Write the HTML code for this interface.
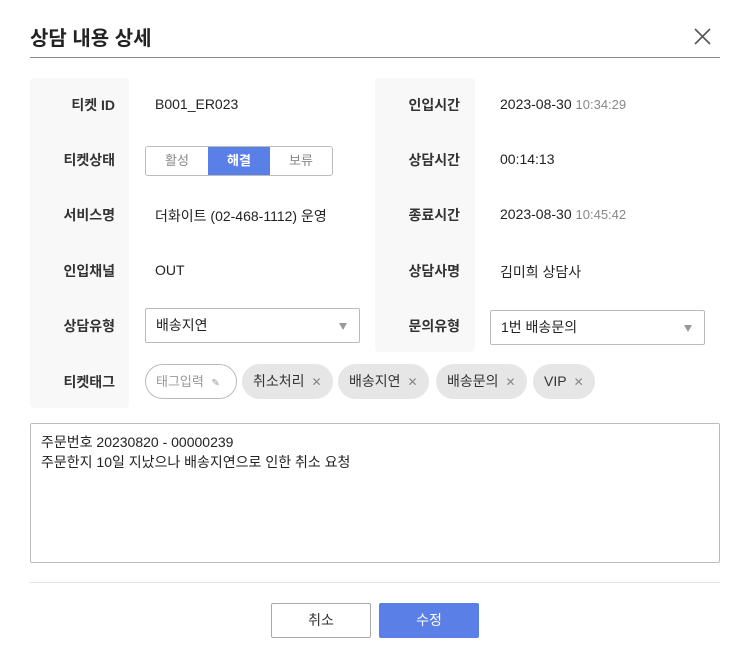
<!DOCTYPE html>
<html><head><meta charset="utf-8"><style>
*{box-sizing:border-box;margin:0;padding:0}
body{width:750px;height:658px;background:#fff;font-family:"Liberation Sans","Noto Sans CJK KR",sans-serif;color:#222;position:relative;overflow:hidden}
.a{position:absolute}
.lab{font-size:14px;font-weight:bold;color:#333;text-align:right}
.val{font-size:14px;color:#222}
.gray{color:#888}
.sel{border:1px solid #bbb;border-radius:2px;height:35px;font-size:14px;padding:0 10px;line-height:33px}
.sel:after{content:"";position:absolute;right:12px;top:14px;border-left:4px solid transparent;border-right:4px solid transparent;border-top:7px solid #999}
.tag{height:35px;border-radius:18px;background:#e6e6e6;font-size:14px;line-height:35px;padding:0 11px;color:#333}
.tag span{color:#888;font-size:12px;margin-left:7px}
</style></head><body>
<div class="a" style="left:30px;top:22px;font-size:20px;font-weight:bold;color:#222">상담 내용 상세</div>
<svg class="a" style="left:694px;top:28px" width="17" height="17" viewBox="0 0 17 17"><path d="M1 1L16 16M16 1L1 16" stroke="#555" stroke-width="1.6"/></svg>
<div class="a" style="left:30px;top:57px;width:690px;height:1px;background:#888"></div>
<div class="a" style="left:30px;top:78px;width:99px;height:330px;background:#f8f8f8;border-radius:4px"></div>
<div class="a" style="left:375px;top:78px;width:100px;height:274px;background:#f8f8f8;border-radius:4px"></div>

<div class="a lab" style="left:30px;width:85px;top:95px">티켓 ID</div>
<div class="a lab" style="left:30px;width:85px;top:150px">티켓상태</div>
<div class="a lab" style="left:30px;width:85px;top:205px">서비스명</div>
<div class="a lab" style="left:30px;width:85px;top:261px">인입채널</div>
<div class="a lab" style="left:30px;width:85px;top:316px">상담유형</div>
<div class="a lab" style="left:30px;width:85px;top:372px">티켓태그</div>

<div class="a lab" style="left:375px;width:85px;top:95px">인입시간</div>
<div class="a lab" style="left:375px;width:85px;top:150px">상담시간</div>
<div class="a lab" style="left:375px;width:85px;top:205px">종료시간</div>
<div class="a lab" style="left:375px;width:85px;top:261px">상담사명</div>
<div class="a lab" style="left:375px;width:85px;top:316px">문의유형</div>

<div class="a val" style="left:155px;top:96px">B001_ER023</div>
<div class="a" style="left:145px;top:146px;width:188px;height:30px;border:1px solid #bbb;border-radius:3px;display:flex;font-size:13px;line-height:28px;text-align:center;overflow:hidden">
<div style="flex:1;color:#888">활성</div><div style="flex:1;background:#5a7fe6;color:#fff;font-weight:bold">해결</div><div style="flex:1;color:#888">보류</div></div>
<div class="a val" style="left:155px;top:206px">더화이트 (02-468-1112) 운영</div>
<div class="a val" style="left:155px;top:262px">OUT</div>
<div class="a sel" style="left:145px;top:308px;width:215px">배송지연</div>

<div class="a val" style="left:500px;top:96px">2023-08-30 <span class="gray" style="font-size:13px">10:34:29</span></div>
<div class="a val" style="left:500px;top:151px">00:14:13</div>
<div class="a val" style="left:500px;top:206px">2023-08-30 <span class="gray" style="font-size:13px">10:45:42</span></div>
<div class="a val" style="left:500px;top:262px">김미희 상담사</div>
<div class="a sel" style="left:490px;top:310px;width:215px">1번 배송문의</div>

<div class="a" style="left:145px;top:364px;width:92px;height:35px;border:1px solid #bbb;border-radius:18px;font-size:13px;line-height:33px;padding-left:10px;color:#999">태그입력 <span style="font-size:10px;margin-left:4px">✎</span></div>
<div class="a tag" style="left:242px;top:364px">취소처리<span>✕</span></div>
<div class="a tag" style="left:338px;top:364px">배송지연<span>✕</span></div>
<div class="a tag" style="left:436px;top:364px">배송문의<span>✕</span></div>
<div class="a tag" style="left:533px;top:364px">VIP<span>✕</span></div>

<div class="a" style="left:30px;top:423px;width:690px;height:140px;border:1px solid #bbb;border-radius:2px;padding:8px 10px;font-size:14px;line-height:20px">주문번호 20230820 - 00000239<br>주문한지 10일 지났으나 배송지연으로 인한 취소 요청</div>
<div class="a" style="left:30px;top:582px;width:690px;height:1px;background:#e2e2e2"></div>
<div class="a" style="left:271px;top:603px;width:100px;height:35px;border:1px solid #aaa;border-radius:2px;text-align:center;line-height:33px;font-size:14px;color:#333">취소</div>
<div class="a" style="left:379px;top:603px;width:100px;height:35px;background:#5a7fe6;border-radius:2px;text-align:center;line-height:35px;font-size:14px;color:#fff">수정</div>
</body></html>
